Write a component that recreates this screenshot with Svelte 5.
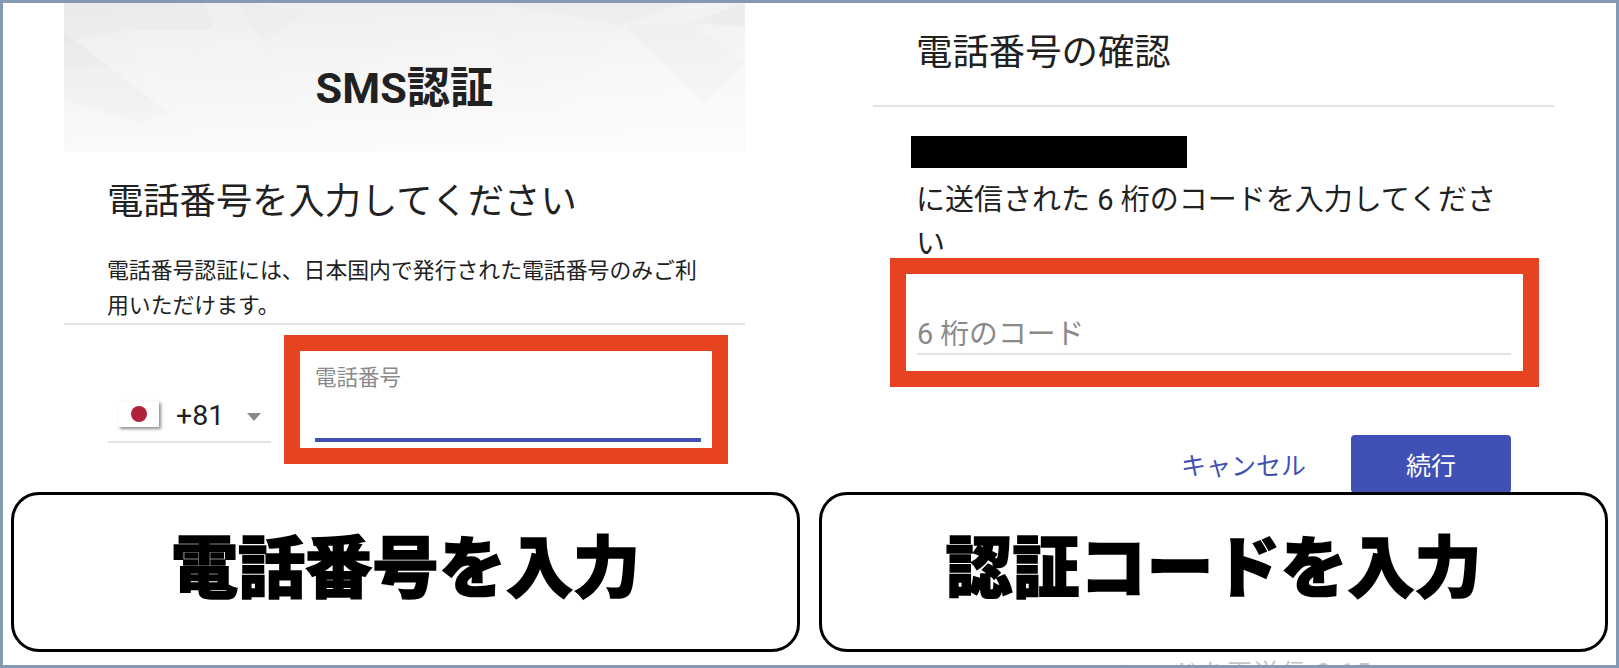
<script>
	let phone = '';
	let code = '';

	const facets = [
		{ points: '0,0 140,0 150,26 66,26 0,40', fill: '#dcdcdc', opacity: 0.16 },
		{ points: '0,29 43,62 0,66', fill: '#d4d4d4', opacity: 0.18 },
		{ points: '43,62 103,109 76,120 0,97 0,66', fill: '#dedede', opacity: 0.16 },
		{ points: '70,27 153,27 80,90', fill: '#ffffff', opacity: 0.1 },
		{ points: '173,0 243,7 200,40', fill: '#dcdcdc', opacity: 0.12 },
		{ points: '153,27 200,40 180,100 103,109', fill: '#ffffff', opacity: 0.08 },
		{ points: '430,0 558,22 620,0', fill: '#dcdcdc', opacity: 0.18 },
		{ points: '558,22 492,117 640,100', fill: '#ffffff', opacity: 0.14 },
		{ points: '626,20 681,0 681,24', fill: '#d8d8d8', opacity: 0.2 },
		{ points: '558,22 626,20 681,60 640,100', fill: '#e2e2e2', opacity: 0.14 },
		{ points: '300,60 420,20 460,110 330,149', fill: '#ffffff', opacity: 0.1 }
	];
</script>

<main class="frame">
	<section class="left">
		<div class="hero">
			<svg class="facets" viewBox="0 0 681 149" preserveAspectRatio="none" aria-hidden="true">
				<defs>
					<linearGradient id="heroFade" x1="0" y1="0" x2="0.3" y2="1">
						<stop offset="0" stop-color="#eeeeee" />
						<stop offset="1" stop-color="#fbfbfb" />
					</linearGradient>
				</defs>
				<rect width="681" height="149" fill="url(#heroFade)" />
				{#each facets as f}
					<polygon points={f.points} fill={f.fill} opacity={f.opacity} />
				{/each}
			</svg>
			<h1>SMS認証</h1>
		</div>

		<div class="copy">
			<h2>電話番号を入力してください</h2>
			<p>電話番号認証には、日本国内で発行された電話番号のみご利用いただけます。</p>
		</div>
		<hr />

		<div class="phone-row">
			<div class="country">
				<span class="flag"><i></i></span>
				<span class="dial">+81</span>
				<span class="caret"></span>
			</div>
			<label class="highlight phone-box">
				<span>電話番号</span>
				<input type="tel" bind:value={phone} />
			</label>
		</div>
	</section>

	<section class="right">
		<h2 class="confirm">電話番号の確認</h2>
		<hr />
		<div class="redacted"></div>
		<p class="sent">に送信された 6 桁のコードを入力してください</p>
		<div class="highlight code-box">
			<input type="text" placeholder="6 桁のコード" bind:value={code} />
		</div>
		<div class="actions">
			<button class="cancel" type="button">キャンセル</button>
			<button class="next" type="button">続行</button>
		</div>
		<p class="resend">コードを再送信 0:15</p>
	</section>

	<div class="callouts">
		<div class="callout">電話番号を入力</div>
		<div class="callout">認証コードを入力</div>
	</div>
</main>

<style>
:global(body) {
	margin: 0;
	background: #fff;
}
.frame {
	position: relative;
	box-sizing: border-box;
	width: 1619px;
	height: 668px;
	border: 3px solid #8499b3;
	background: #fff;
	overflow: hidden;
	display: grid;
	grid-template-columns: 797px 1fr;
	font-family: Roboto, "Noto Sans CJK JP", sans-serif;
	color: #212121;
}
.left {
	margin-left: 61px;
	width: 681px;
}
.hero {
	display: grid;
	height: 149px;
}
.facets {
	grid-area: 1 / 1;
	width: 681px;
	height: 149px;
}
h1 {
	grid-area: 1 / 1;
	z-index: 1;
	margin: 0;
	padding-top: 23px;
	align-self: center;
	text-align: center;
	font-size: 43.3px;
	line-height: 50px;
	font-weight: 700;
}
h2 {
	margin: 0;
	font-size: 36.3px;
	line-height: 50px;
	font-weight: 400;
}
hr {
	margin: 0;
	border: 0;
	height: 2px;
	background: #e2e2e2;
}
.copy {
	padding: 25px 40px 0 43px;
}
.copy p {
	margin: 26px 0 0;
	font-size: 21.85px;
	line-height: 35px;
}
.phone-row {
	display: flex;
	gap: 13px;
	margin-top: 10px;
	padding-left: 44px;
}
.country {
	box-sizing: border-box;
	width: 163px;
	height: 48px;
	align-self: flex-end;
	margin-bottom: 21px;
	padding: 0 9px 8px 10px;
	display: flex;
	align-items: center;
	border-bottom: 2px solid #e2e2e2;
}
.flag {
	width: 41px;
	height: 26px;
	display: flex;
	align-items: center;
	justify-content: center;
	background: #fff;
	box-shadow: 2px 2px 3px #8f8f8f;
}
.flag i {
	width: 16px;
	height: 16px;
	border-radius: 50%;
	background: #b0213a;
}
.dial {
	margin-left: 17px;
	padding-top: 4px;
	font-size: 28.5px;
	line-height: 32px;
}
.caret {
	margin: 5px 0 0 23px;
	border-left: 7.5px solid transparent;
	border-right: 7.5px solid transparent;
	border-top: 8px solid #8a8a8a;
}
.highlight {
	box-sizing: border-box;
	border: 16px solid #e64320;
	background: #fff;
}
.phone-box {
	width: 444px;
	height: 129px;
	display: flex;
	flex-direction: column;
	justify-content: space-between;
	padding: 12px 11px 6px 15px;
}
.phone-box span {
	font-size: 21.5px;
	line-height: 30px;
	color: #8a8a8a;
}
.phone-box input {
	box-sizing: border-box;
	width: 100%;
	height: 32px;
	padding: 0;
	border: 0;
	border-bottom: 4px solid #3f51b5;
	outline: none;
	background: transparent;
}
.right {
	padding-left: 73px;
	width: 681px;
	padding-top: 25px;
}
.right hr {
	width: 681px;
}
.confirm {
	margin: 0 0 27px 43px;
	font-size: 36.4px;
}
.redacted {
	width: 276px;
	height: 32px;
	margin: 29px 0 0 38px;
	background: #000;
}
.sent {
	width: 590px;
	margin: 10px 0 0 43px;
	font-size: 29px;
	line-height: 44px;
}
.code-box {
	width: 649px;
	height: 129px;
	margin: -8px 0 0 17px;
	padding: 46px 12px 16px 11px;
}
.code-box input {
	box-sizing: border-box;
	display: block;
	width: 594px;
	height: 35px;
	padding: 0 0 5px 0;
	border: 0;
	border-bottom: 2px solid #e2e2e2;
	outline: none;
	font: inherit;
	font-size: 28.8px;
	color: #212121;
}
.code-box input::placeholder {
	color: #8a8a8a;
	opacity: 1;
}
.actions {
	display: flex;
	justify-content: flex-end;
	align-items: center;
	gap: 45px;
	width: 638px;
	margin-top: 48px;
}
button {
	margin: 0;
	padding: 0;
	border: 0;
	background: none;
	font: inherit;
	font-size: 25px;
}
.cancel {
	color: #3f51b5;
}
.next {
	width: 160px;
	height: 58px;
	border-radius: 4px;
	background: #3f51b5;
	color: #fff;
}
.resend {
	margin: 163px 0 0;
	width: 681px;
	padding-left: 246px;
	box-sizing: border-box;
	font-size: 25px;
	letter-spacing: 2px;
	line-height: 36px;
	color: #c4c4c4;
}
.callouts {
	position: absolute;
	top: 489px;
	left: 8px;
	right: 8px;
	display: flex;
	gap: 19px;
}
.callout {
	flex: 1;
	box-sizing: border-box;
	height: 160px;
	padding-bottom: 20px;
	display: flex;
	align-items: center;
	justify-content: center;
	border: 3px solid #000;
	border-radius: 28px;
	background: #fff;
	color: #000;
	font-size: 67px;
	font-weight: 900;
	-webkit-text-stroke: 1.5px #000;
	white-space: nowrap;
}
</style>
